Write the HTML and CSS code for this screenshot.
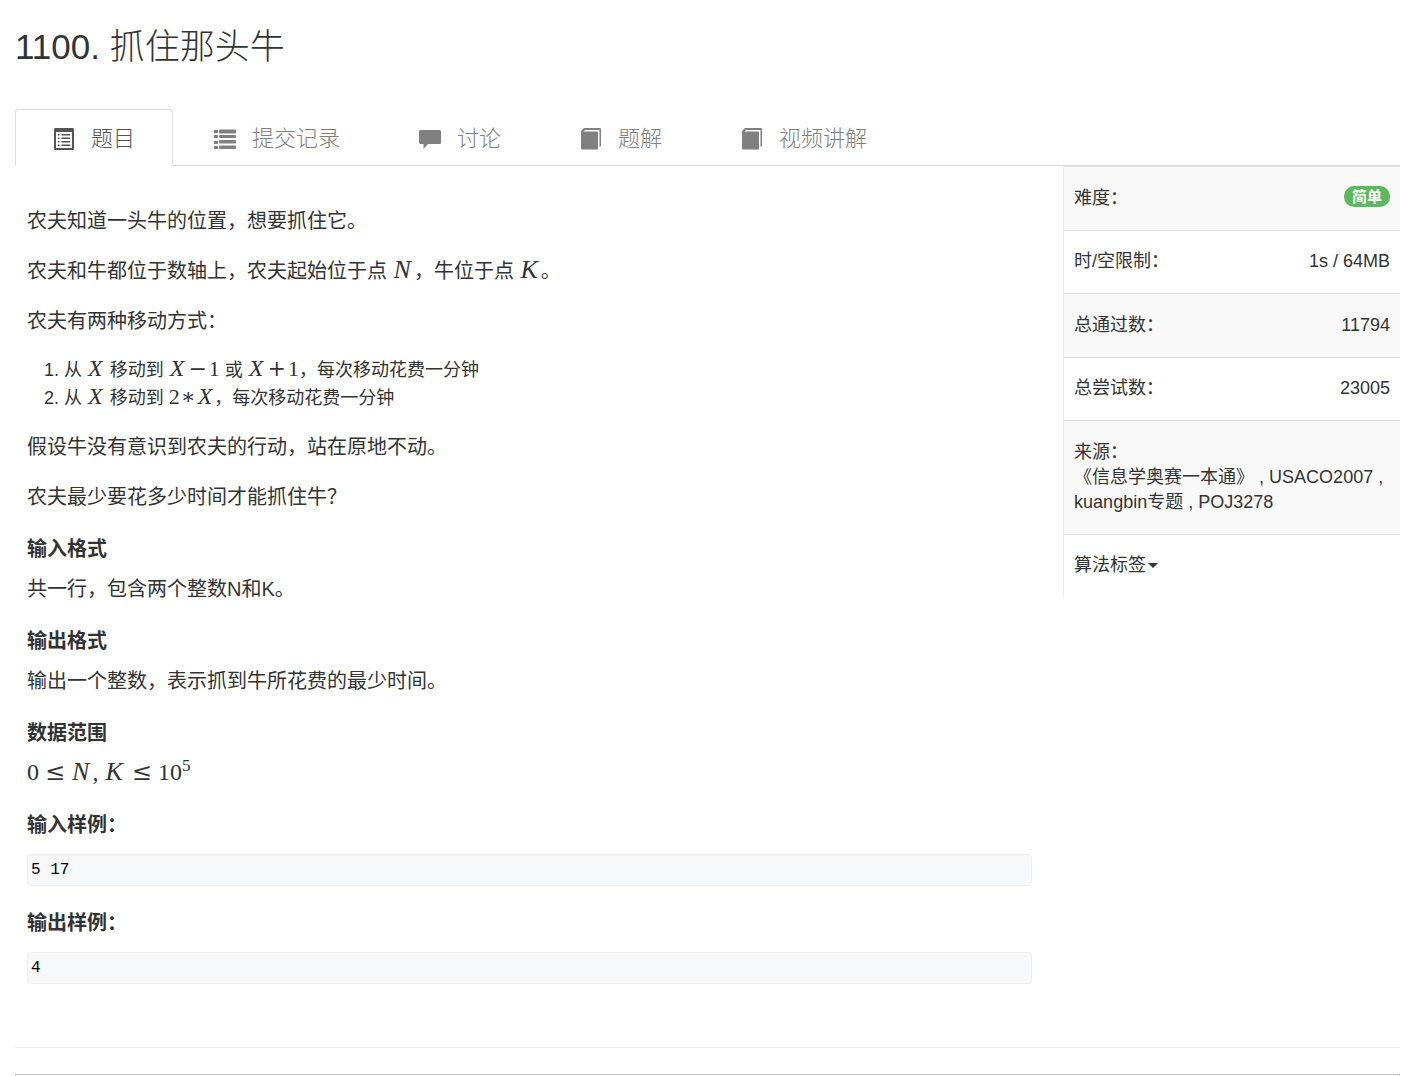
FILE: index.html
```html
<!DOCTYPE html>
<html lang="zh-CN">
<head>
<meta charset="utf-8">
<meta name="viewport" content="width=device-width, initial-scale=1">
<title>1100. 抓住那头牛</title>
<link rel="stylesheet" href="styles.css">
</head>
<body>
<main class="page">
  <h1 class="title">1100. 抓住那头牛</h1>

  <nav class="tabs">
    <a class="tab tab-active" href="#problem">
      <svg class="icon" viewBox="0 0 22 22" aria-hidden="true"><path fill-rule="evenodd" d="M2 0h18a1 1 0 0 1 1 1v20a1 1 0 0 1-1 1H2a1 1 0 0 1-1-1V1a1 1 0 0 1 1-1zM3 4v16h16V4z"/><path d="M5 6h1.500v1.500H5zm3.500 0H17v1.500H8.500zM5 9.500h1.500V11H5zm3.500 0H17V11H8.500zM5 13h1.500v1.500H5zm3.500 0H17v1.500H8.500zM5 16.500h1.500V18H5zm3.500 0H17V18H8.500z"/></svg>
      <span>题目</span>
    </a>
    <a class="tab" href="#submissions">
      <svg class="icon" viewBox="0 0 22 22" aria-hidden="true"><path d="M0 2h4v3H0zm0 5h4v3H0zm0 6h4v3H0zm0 5h4v3H0z"/><path d="M6 1.500h15a1 1 0 0 1 1 1v2a1 1 0 0 1-1 1H6a1 1 0 0 1-1-1v-2a1 1 0 0 1 1-1zM6 7h15a1 1 0 0 1 1 1v1a1 1 0 0 1-1 1H6a1 1 0 0 1-1-1V8a1 1 0 0 1 1-1zM6 12h15a1 1 0 0 1 1 1v1.500a1 1 0 0 1-1 1H6a1 1 0 0 1-1-1V13a1 1 0 0 1 1-1zM6 17.500h15a1 1 0 0 1 1 1V20a1 1 0 0 1-1 1H6a1 1 0 0 1-1-1v-1.500a1 1 0 0 1 1-1z"/></svg>
      <span>提交记录</span>
    </a>
    <a class="tab" href="#discussion">
      <svg class="icon" viewBox="0 0 22 22" aria-hidden="true"><path d="M1.500 2h19A1.500 1.500 0 0 1 22 3.500v11a1.500 1.500 0 0 1-1.500 1.500H9l-4.500 5V16h-3A1.500 1.500 0 0 1 0 14.500v-11A1.500 1.500 0 0 1 1.500 2z"/></svg>
      <span>讨论</span>
    </a>
    <a class="tab" href="#solutions">
      <svg class="icon" viewBox="0 0 22 22" aria-hidden="true"><path d="M4 0h16a1 1 0 0 1 1 1v17l-1.500 1V2H5L3.500 3.500H17a1 1 0 0 1 1 1v17H2a1 1 0 0 1-1-1V3z"/></svg>
      <span>题解</span>
    </a>
    <a class="tab" href="#videos">
      <svg class="icon" viewBox="0 0 22 22" aria-hidden="true"><path d="M4 0h16a1 1 0 0 1 1 1v17l-1.500 1V2H5L3.500 3.500H17a1 1 0 0 1 1 1v17H2a1 1 0 0 1-1-1V3z"/></svg>
      <span>视频讲解</span>
    </a>
  </nav>

  <div class="columns">
    <article class="problem" id="problem">
      <p>农夫知道一头牛的位置，想要抓住它。</p>
      <p>农夫和牛都位于数轴上，农夫起始位于点 <span class="math"><i>N</i></span>，牛位于点 <span class="math"><i>K</i></span>。</p>
      <p>农夫有两种移动方式：</p>
      <ol class="moves">
        <li>从 <span class="math"><i>X</i></span> 移动到 <span class="math"><i>X</i><b>−</b>1</span> 或 <span class="math"><i>X</i><b>+</b>1</span>，每次移动花费一分钟</li>
        <li>从 <span class="math"><i>X</i></span> 移动到 <span class="math">2<b class="tight">∗</b><i>X</i></span>，每次移动花费一分钟</li>
      </ol>
      <p>假设牛没有意识到农夫的行动，站在原地不动。</p>
      <p>农夫最少要花多少时间才能抓住牛？</p>

      <h2>输入格式</h2>
      <p>共一行，包含两个整数N和K。</p>

      <h2>输出格式</h2>
      <p>输出一个整数，表示抓到牛所花费的最少时间。</p>

      <h2>数据范围</h2>
      <p><span class="math">0<b>≤</b><i>N</i>, <i>K</i><b>≤</b>10<sup>5</sup></span></p>

      <h2>输入样例：</h2>
      <pre><code>5 17</code></pre>

      <h2>输出样例：</h2>
      <pre><code>4</code></pre>
    </article>

    <aside class="sidebar">
      <table class="facts">
        <tr><th scope="row">难度：</th><td><span class="badge">简单</span></td></tr>
        <tr><th scope="row">时/空限制：</th><td>1s / 64MB</td></tr>
        <tr><th scope="row">总通过数：</th><td>11794</td></tr>
        <tr><th scope="row">总尝试数：</th><td>23005</td></tr>
        <tr><td class="wide" colspan="2">来源：<br><a href="#book">《信息学奥赛一本通》</a> , <a href="#usaco">USACO2007</a> , <a href="#kuangbin">kuangbin专题</a> , <a href="#poj">POJ3278</a></td></tr>
        <tr><td class="wide" colspan="2"><button class="tags" type="button">算法标签<span class="caret"></span></button></td></tr>
      </table>
    </aside>
  </div>

  <hr class="divider">
  <div class="editor"></div>
</main>
</body>
</html>
```
FILE: styles.css
```css
* {
  box-sizing: border-box;
}

body {
  margin: 0;
  background: #fff;
  color: #333;
  font-family: "Liberation Sans", "Noto Sans CJK SC", sans-serif;
  font-size: 18px;
  line-height: 25px;
  text-spacing-trim: space-all;
}

a {
  color: inherit;
  text-decoration: none;
}

.page {
  display: flex;
  flex-direction: column;
  min-height: 100vh;
  padding: 27px 8px 0 15px;
}

.title {
  margin: 0 0 42px;
  font-size: 35px;
  font-weight: 300;
  line-height: 40px;
}

/* Tabs */
.tabs {
  display: flex;
  gap: 3px;
  border-bottom: 1px solid #ddd;
}

.tab {
  display: flex;
  align-items: center;
  gap: 16px;
  height: 57px;
  margin-bottom: -1px;
  padding: 2px 37px 0;
  border: 1px solid transparent;
  border-radius: 4px 4px 0 0;
  color: #808080;
  font-size: 22px;
  font-weight: 300;
}

.tab-active {
  border-color: #ddd #ddd #fff;
  background: #fff;
  color: #555;
}

.icon {
  width: 22px;
  height: 22px;
  fill: currentColor;
}

/* Two columns */
.columns {
  display: grid;
  grid-template-columns: 28fr 9fr;
  align-items: start;
}

.problem {
  padding: 40px 31px 0 12px;
  font-size: 20px;
  line-height: 30px;
}

.problem p {
  margin: 0 0 20px;
}

.problem h2 {
  margin: 26px 0 14px;
  font-size: 20px;
  line-height: 22px;
}

.moves {
  margin: 0 0 20px;
  padding-left: 37px;
  font-size: 18px;
  line-height: 28px;
}

.problem pre {
  margin: 18px 0 0;
  padding: 3px;
  border: 1px solid #eee;
  border-radius: 4px;
  background: #f6f8fa;
  color: #000;
  font-size: 16px;
  line-height: 24px;
}

.problem code {
  display: block;
  font-family: "Liberation Mono", monospace;
}

/* Formulas */
.math {
  font-family: "Liberation Serif", serif;
  font-size: 24px;
  line-height: 1;
}

.math i {
  padding: 0 3px 0 1px;
  font-size: 26px;
  line-height: 0;
}

.math b {
  padding: 0 6px;
  font-family: "DejaVu Serif", serif;
  font-weight: 400;
  line-height: 0;
}

.math sup {
  font-size: 17px;
  line-height: 0;
}

.moves .math {
  font-size: 22px;
}

.moves .math i {
  padding-right: 2px;
  font-size: 24px;
}

.moves .math b {
  padding: 0 2px;
}

.moves .math .tight {
  padding: 0 1px;
}

/* Sidebar */
.facts {
  width: 100%;
  border-collapse: separate;
  border-spacing: 0;
  border-left: 1px solid #eee;
}

.facts th,
.facts td {
  padding: 19px 10px;
  border-top: 1px solid #ddd;
  font-weight: 400;
  text-align: left;
  vertical-align: top;
}

.facts tr:nth-child(even) > * {
  padding-top: 18px;
}

.facts td {
  text-align: right;
}

.facts .wide {
  text-align: left;
}

.facts tr:nth-child(odd) {
  background: #f9f9f9;
}

.badge {
  display: inline-block;
  padding: 0 8px;
  border-radius: 10px;
  background: #5cb85c;
  color: #fff;
  font-size: 15px;
  font-weight: 700;
  line-height: 21px;
  vertical-align: top;
}

.tags {
  display: flex;
  align-items: center;
  gap: 2px;
  padding: 0;
  border: 0;
  background: none;
  color: inherit;
  font: inherit;
}

.caret {
  border: 5px solid transparent;
  border-top-color: currentColor;
  border-bottom: 0;
}

/* Code editor below the statement */
.divider {
  width: 100%;
  margin: 63px 0 26px;
  border: 0;
  border-top: 1px solid #eee;
}

.editor {
  flex: 1;
  border: 1px solid #c0c0d0;
  border-bottom: 0;
}
```
